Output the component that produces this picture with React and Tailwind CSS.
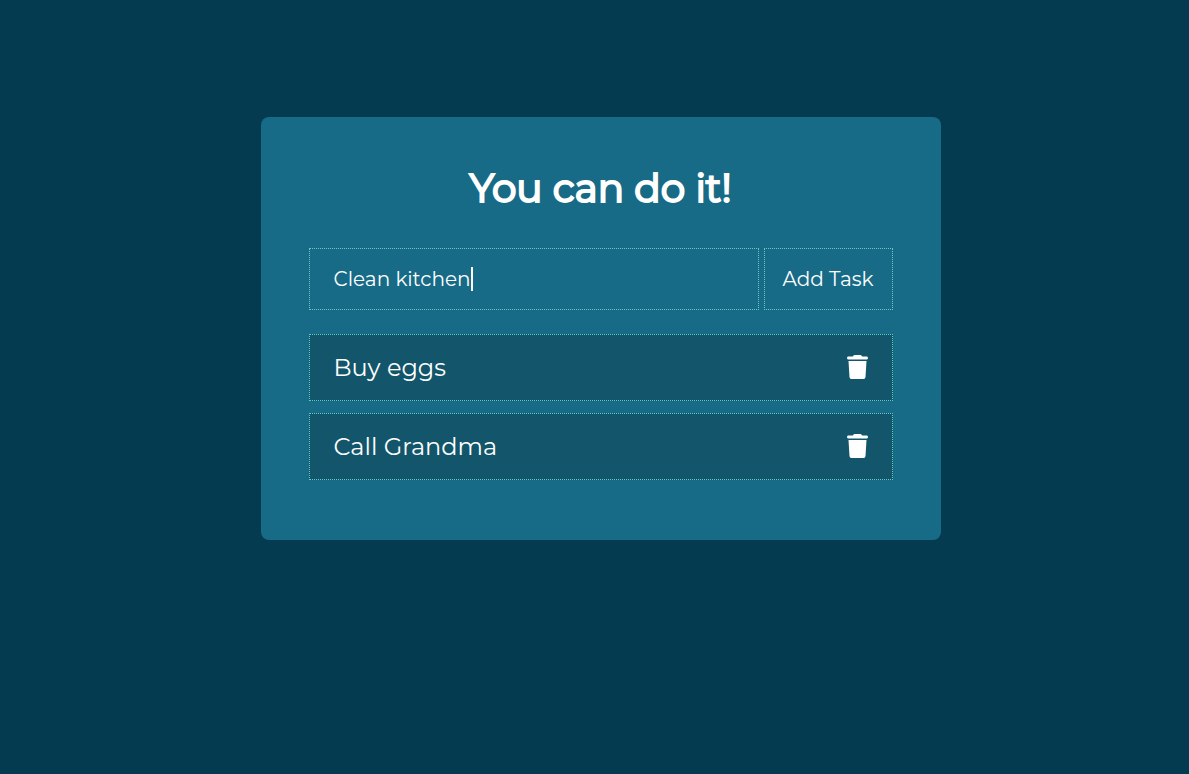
import { useState } from "react";
import { FaTrash } from "react-icons/fa6";

function TaskItem({ name, onDelete }) {
  return (
    <li className="flex items-start justify-between border border-dotted border-[#64ccc5] bg-[#13566b] px-6 py-4">
      <span className="text-2xl leading-[33px]">{name}</span>
      <button type="button" aria-label={`Delete ${name}`} onClick={onDelete} className="flex h-8 items-center text-white">
        <FaTrash className="h-6 w-[21px]" />
      </button>
    </li>
  );
}

export default function App() {
  const [draft, setDraft] = useState("Clean kitchen");
  const [tasks, setTasks] = useState(["Buy eggs", "Call Grandma"]);

  const addTask = (event) => {
    event.preventDefault();
    if (!draft.trim()) return;
    setTasks([...tasks, draft.trim()]);
    setDraft("");
  };

  return (
    <div className="flex min-h-screen items-start justify-center bg-[#053b50] pt-[117px] pl-3 font-[Montserrat,Inter,sans-serif] text-white">
      <main className="w-full max-w-[680px] rounded-lg bg-[#176b87] px-12 pt-12 pb-[60px]">
        <h1 className="text-center text-[39px] leading-[47px] font-normal [-webkit-text-stroke:2px_white]">You can do it!</h1>
        <form onSubmit={addTask} className="mt-9 flex gap-[5px]">
          <div className="relative min-w-0 flex-1">
            <input
              type="text"
              aria-label="New task"
              value={draft}
              onChange={(event) => setDraft(event.target.value)}
              className="block h-[62px] w-full border border-dotted border-[#64ccc5] bg-transparent px-6 text-xl caret-transparent outline-none"
            />
            {draft === "Clean kitchen" && <span className="absolute top-[19px] left-[162px] h-6 w-0.5 bg-white" />}
          </div>
          <button type="submit" className="h-[62px] w-[129px] border border-dotted border-[#64ccc5] text-xl">
            Add Task
          </button>
        </form>
        <ul className="mt-6 flex flex-col gap-3">
          {tasks.map((task, index) => (
            <TaskItem key={index} name={task} onDelete={() => setTasks(tasks.filter((_, i) => i !== index))} />
          ))}
        </ul>
      </main>
    </div>
  );
}
